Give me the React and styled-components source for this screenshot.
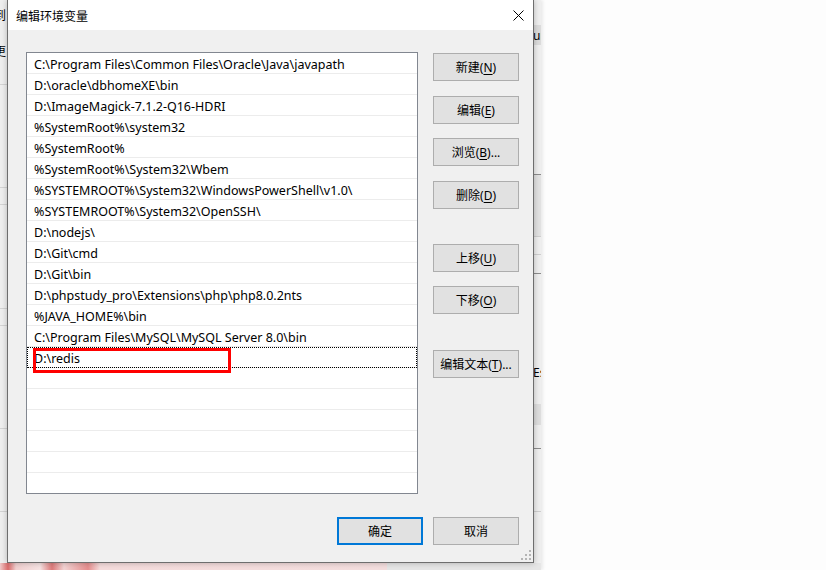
import React from 'react';
import styled, { createGlobalStyle } from 'styled-components';

const GlobalStyle = createGlobalStyle`
  html, body {
    margin: 0;
    padding: 0;
    background: #fdfdfd;
  }
  body {
    font-family: "Noto Sans", "Noto Sans CJK SC", sans-serif;
    font-size: 12px;
    color: #000;
  }
`;

const Desktop = styled.div`
  position: relative;
  width: 826px;
  height: 570px;
  overflow: hidden;
  background: #fdfdfd;
`;

// window lying behind the dialog, only its edges show
const BackWindow = styled.div`
  position: absolute;
  left: 0;
  top: 0;
  width: 541px;
  height: 570px;
  display: flex;
  justify-content: space-between;
  background: #ececec;
  box-shadow: 2px 0 3px rgba(0, 0, 0, 0.08);
`;

const BackPane = styled.div`
  position: relative;
  width: ${p => p.$width}px;
  height: 563px;
  background-color: #efefef;
  background-image: ${p => p.$lines};
  font-family: "Noto Sans", "Noto Sans CJK SC", sans-serif;
  font-size: 12px;
  overflow: hidden;
`;

const BackText = styled.span`
  position: absolute;
  top: ${p => p.$top}px;
  left: ${p => p.$left}px;
  white-space: nowrap;
`;

const BackArt = styled.div`
  position: absolute;
  left: 0;
  top: 563px;
  width: 541px;
  height: 7px;
  background:
    linear-gradient(90deg,
      #f0c8c8 0px, #d96b6b 8px, #f1d0d0 16px, #f7e4e4 40px, #dd7a7a 52px,
      #f3d4d4 64px, #e68f8f 88px, #f5dcdc 100px, #f4dede 387px,
      #e6e6e6 387px, #e6e6e6 541px);
`;

const Dialog = styled.div`
  position: absolute;
  left: 7px;
  top: 0;
  width: 527px;
  height: 563px;
  box-sizing: border-box;
  border: 1px solid #6e6e6e;
  border-top: none;
  background: #f0f0f0;
  display: flex;
  flex-direction: column;
  box-shadow: 0 0 6px rgba(0, 0, 0, 0.25);
`;

const TitleBar = styled.div`
  height: 30px;
  flex-shrink: 0;
  display: flex;
  align-items: center;
  padding-left: 8px;
  background: #fff;
  font-family: "Noto Sans CJK SC", sans-serif;
  font-size: 12px;
`;

const CloseButton = styled.div`
  margin-left: auto;
  width: 28px;
  height: 30px;
  display: flex;
  align-items: center;
  justify-content: center;
  margin-right: 1px;
`;

const Body = styled.div`
  flex: 1;
  display: flex;
  flex-direction: column;
  padding: 22px 14px 0 18px;
  position: relative;
`;

const MainRow = styled.div`
  display: flex;
  gap: 15px;
`;

const ListBox = styled.div`
  width: 392px;
  height: 442px;
  box-sizing: border-box;
  border: 1px solid #828790;
  background: #fff;
  overflow: hidden;
`;

const Row = styled.div`
  position: relative;
  height: 21px;
  box-sizing: border-box;
  border-bottom: 1px solid #ececec;
  padding-left: 7px;
  font-size: 12.5px;
  line-height: 23px;
  white-space: nowrap;
  outline: ${p => (p.$focused ? '1px dotted #000' : 'none')};
  outline-offset: -1px;
`;

const Marker = styled.div`
  position: absolute;
  left: 6px;
  top: 1px;
  width: 198px;
  height: 25px;
  box-sizing: border-box;
  border: 3px solid #ff0000;
`;

const ButtonColumn = styled.div`
  width: 86px;
  display: flex;
  flex-direction: column;
  padding-top: 1px;
`;

const Button = styled.button`
  width: 86px;
  height: 28px;
  margin-top: ${p => p.$gap || 0}px;
  box-sizing: border-box;
  padding: 0;
  border: ${p => (p.$primary ? '2px solid #0078d7' : '1px solid #adadad')};
  background: #e1e1e1;
  font-family: "Noto Sans", "Noto Sans CJK SC", sans-serif;
  font-size: 12px;
  color: #000;
  cursor: default;
`;

const Key = styled.span`
  text-decoration: underline;
  text-underline-offset: 2px;
`;

const Footer = styled.div`
  display: flex;
  justify-content: flex-end;
  gap: 10px;
  margin-top: 23px;
`;

const Grip = styled.svg`
  position: absolute;
  right: 1px;
  bottom: 1px;
`;

const paths = [
  'C:\\Program Files\\Common Files\\Oracle\\Java\\javapath',
  'D:\\oracle\\dbhomeXE\\bin',
  'D:\\ImageMagick-7.1.2-Q16-HDRI',
  '%SystemRoot%\\system32',
  '%SystemRoot%',
  '%SystemRoot%\\System32\\Wbem',
  '%SYSTEMROOT%\\System32\\WindowsPowerShell\\v1.0\\',
  '%SYSTEMROOT%\\System32\\OpenSSH\\',
  'D:\\nodejs\\',
  'D:\\Git\\cmd',
  'D:\\Git\\bin',
  'D:\\phpstudy_pro\\Extensions\\php\\php8.0.2nts',
  '%JAVA_HOME%\\bin',
  'C:\\Program Files\\MySQL\\MySQL Server 8.0\\bin',
  'D:\\redis',
  '', '', '', '', '', '', ''
];

const sideButtons = [
  { label: '新建', key: 'N', gap: 0 },
  { label: '编辑', key: 'E', gap: 15 },
  { label: '浏览', key: 'B', more: true, gap: 14 },
  { label: '删除', key: 'D', gap: 15 },
  { label: '上移', key: 'U', gap: 35 },
  { label: '下移', key: 'O', gap: 14 },
  { label: '编辑文本', key: 'T', more: true, gap: 36 }
];

const line = (y, c) => `linear-gradient(to bottom, transparent ${y}px, ${c} ${y}px, ${c} ${y + 1}px, transparent ${y + 1}px)`;
const band = (y1, y2, c) => `linear-gradient(to bottom, transparent ${y1}px, ${c} ${y1}px, ${c} ${y2}px, transparent ${y2}px)`;

const leftLines = [
  line(84, '#d4d4d4'), line(187, '#d4d4d4'), line(204, '#d4d4d4'),
  line(308, '#d4d4d4'), line(325, '#d4d4d4'), line(428, '#d4d4d4'), line(511, '#d4d4d4')
].join(', ');

const rightLines = [
  band(25, 45, '#dcdcdc'), line(174, '#8c8c8c'), band(175, 236, '#e2e2e2'), line(236, '#cfcfcf'),
  line(254, '#cfcfcf'), line(273, '#8c8c8c'), band(404, 425, '#dedede'), line(448, '#8c8c8c'),
  line(511, '#cfcfcf')
].join(', ');

function Label({ label, k, more }) {
  return (
    <>
      {label}(<Key>{k}</Key>){more ? '...' : ''}
    </>
  );
}

export default function App() {
  return (
    <Desktop>
      <GlobalStyle />
      <BackWindow>
        <BackPane $width={7} $lines={leftLines}>
          <BackText $top={6} $left={-6}>到</BackText>
          <BackText $top={42} $left={-6}>更</BackText>
        </BackPane>
        <BackPane $width={8} $lines={rightLines}>
          <BackText $top={27} $left={0}>ur</BackText>
          <BackText $top={364} $left={0}>Es</BackText>
        </BackPane>
      </BackWindow>
      <BackArt />
      <Dialog>
        <TitleBar>
          编辑环境变量
          <CloseButton>
            <svg width="11" height="11" viewBox="0 0 11 11">
              <path d="M0.5 0.5 L10.5 10.5 M10.5 0.5 L0.5 10.5" stroke="#000" strokeWidth="1" fill="none" />
            </svg>
          </CloseButton>
        </TitleBar>
        <Body>
          <MainRow>
            <ListBox>
              {paths.map((p, i) => (
                <Row key={i} $focused={p === 'D:\\redis'}>
                  {p}
                  {p === 'D:\\redis' && <Marker />}
                </Row>
              ))}
            </ListBox>
            <ButtonColumn>
              {sideButtons.map(b => (
                <Button key={b.key} $gap={b.gap}>
                  <Label label={b.label} k={b.key} more={b.more} />
                </Button>
              ))}
            </ButtonColumn>
          </MainRow>
          <Footer>
            <Button $primary>确定</Button>
            <Button>取消</Button>
          </Footer>
          <Grip width="11" height="11" viewBox="0 0 11 11">
            <rect x="8" y="0" width="2" height="2" fill="#b4b4b4" />
            <rect x="4" y="4" width="2" height="2" fill="#b4b4b4" />
            <rect x="8" y="4" width="2" height="2" fill="#b4b4b4" />
            <rect x="0" y="8" width="2" height="2" fill="#b4b4b4" />
            <rect x="4" y="8" width="2" height="2" fill="#b4b4b4" />
            <rect x="8" y="8" width="2" height="2" fill="#b4b4b4" />
          </Grip>
        </Body>
      </Dialog>
    </Desktop>
  );
}
